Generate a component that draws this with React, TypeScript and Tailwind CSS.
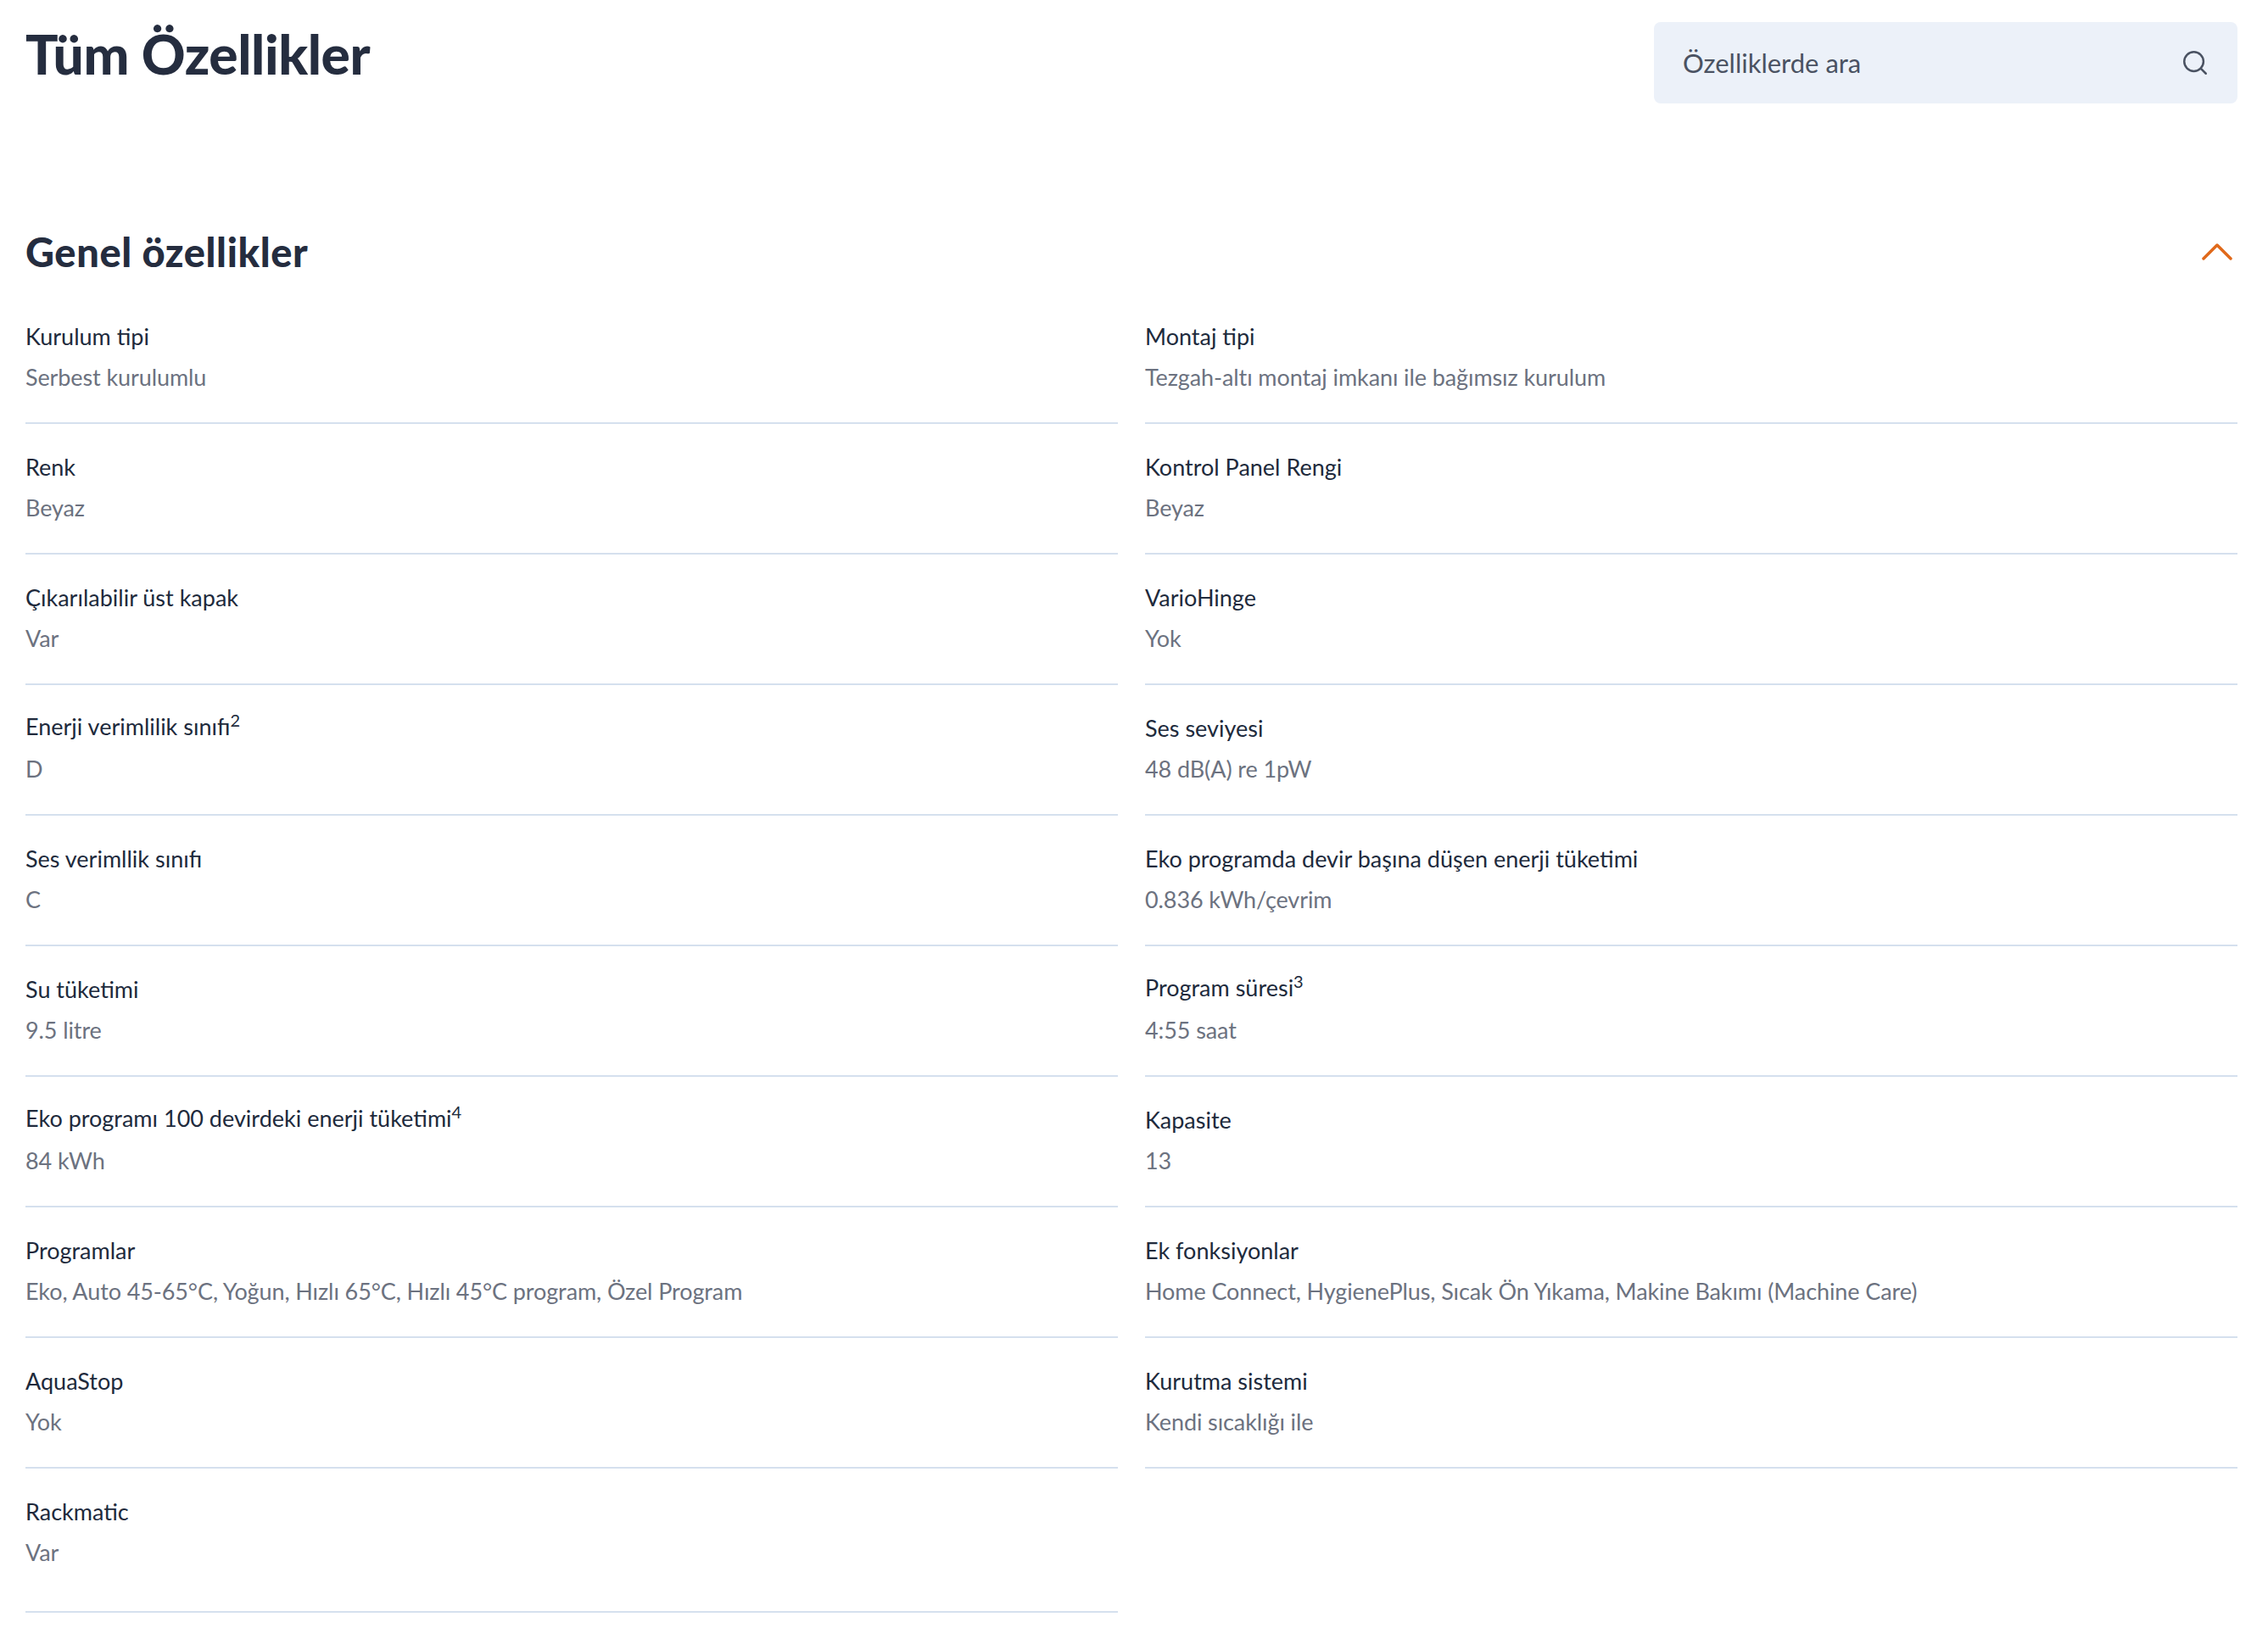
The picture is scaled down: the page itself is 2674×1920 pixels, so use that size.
import { Search } from 'lucide-react';

interface Spec {
  label: string;
  sup?: string;
  value: string;
}

const left: Spec[] = [
  { label: 'Kurulum tipi', value: 'Serbest kurulumlu' },
  { label: 'Renk', value: 'Beyaz' },
  { label: 'Çıkarılabilir üst kapak', value: 'Var' },
  { label: 'Enerji verimlilik sınıfı', sup: '2', value: 'D' },
  { label: 'Ses verimllik sınıfı', value: 'C' },
  { label: 'Su tüketimi', value: '9.5 litre' },
  { label: 'Eko programı 100 devirdeki enerji tüketimi', sup: '4', value: '84 kWh' },
  { label: 'Programlar', value: 'Eko, Auto 45-65°C, Yoğun, Hızlı 65°C, Hızlı 45°C program, Özel Program' },
  { label: 'AquaStop', value: 'Yok' },
  { label: 'Rackmatic', value: 'Var' },
];

const right: Spec[] = [
  { label: 'Montaj tipi', value: 'Tezgah-altı montaj imkanı ile bağımsız kurulum' },
  { label: 'Kontrol Panel Rengi', value: 'Beyaz' },
  { label: 'VarioHinge', value: 'Yok' },
  { label: 'Ses seviyesi', value: '48 dB(A) re 1pW' },
  { label: 'Eko programda devir başına düşen enerji tüketimi', value: '0.836 kWh/çevrim' },
  { label: 'Program süresi', sup: '3', value: '4:55 saat' },
  { label: 'Kapasite', value: '13' },
  { label: 'Ek fonksiyonlar', value: 'Home Connect, HygienePlus, Sıcak Ön Yıkama, Makine Bakımı (Machine Care)' },
  { label: 'Kurutma sistemi', value: 'Kendi sıcaklığı ile' },
];

function SpecRow({ spec, tall }: { spec: Spec; tall?: boolean }) {
  return (
    <div className={`border-b-2 border-[#d5e0ee] pt-[34px] ${tall ? 'h-[170px]' : 'h-[154px]'}`}>
      <p className={`h-[48px] text-[27px] leading-[34px] text-[#202a3c] ${spec.sup ? '-translate-y-0.5' : ''}`}>
        {spec.label}
        {spec.sup && <sup className="text-[20px]">{spec.sup}</sup>}
      </p>
      <p className="text-[27px] leading-[34px] tracking-[-0.1px] text-[#6c7280]">{spec.value}</p>
    </div>
  );
}

export default function App() {
  return (
    <div className="min-h-[1920px] bg-white pl-[30px] pr-[36px] font-['Lato',sans-serif]">
      <div className="flex items-start justify-between pt-[26px]">
        <h1 className="text-[64px] leading-[76px] font-black tracking-[-0.4px] text-[#252d3f]">Tüm Özellikler</h1>
        <div className="flex h-[96px] w-[688px] items-center justify-between rounded-lg bg-[#ecf1f9] pl-[34px] pr-[33px]">
          <span className="text-[31px] text-[#4a5262]">Özelliklerde ara</span>
          <Search className="h-[34px] w-[34px] text-[#4a5262]" strokeWidth={1.75} />
        </div>
      </div>
      <div className="mt-[147px] flex items-center justify-between pr-[6px]">
        <h2 className="text-[47px] leading-[56px] font-black tracking-[0.6px] text-[#252d3f]">Genel özellikler</h2>
        <svg className="h-[20px] w-[36px] text-[#e0691a]" viewBox="0 0 36 20" fill="none" stroke="currentColor" strokeWidth="3.5" strokeLinecap="round" strokeLinejoin="round">
          <path d="M2 18 18 2 34 18" />
        </svg>
      </div>
      <div className="mt-[21px] grid grid-cols-2 items-start gap-x-[32px]">
        <div>
          {left.map((s) => (
            <SpecRow key={s.label} spec={s} tall={s.label === 'Rackmatic'} />
          ))}
        </div>
        <div>
          {right.map((s) => (
            <SpecRow key={s.label} spec={s} />
          ))}
        </div>
      </div>
    </div>
  );
}
